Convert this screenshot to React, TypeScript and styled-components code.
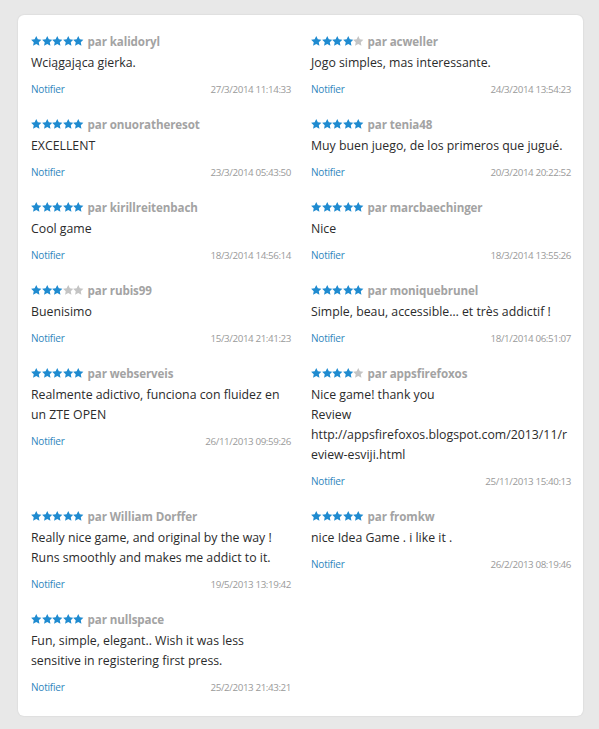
import React from "react";
import styled, { createGlobalStyle } from "styled-components";

const Global = createGlobalStyle`
  html, body { margin: 0; padding: 0; background: #e8e8e8; }
  body { font-family: "Open Sans", "Noto Sans", sans-serif; }
`;

const Page = styled.div`
  padding: 15px 16px 14px 18px;
  min-height: 729px;
  box-sizing: border-box;
`;

const Card = styled.section`
  width: 565px;
  background: #fff;
  border-radius: 6px;
  box-shadow: 0 0 2px rgba(0, 0, 0, 0.12);
  padding: 16px 12px 4px 13px;
  box-sizing: border-box;
`;

const List = styled.ul`
  list-style: none;
  margin: 0;
  padding: 0;
  display: grid;
  grid-template-columns: 260px 260px;
  column-gap: 20px;
  align-items: start;
`;

const Item = styled.li`
  margin: 0 0 16px;
`;

const Header = styled.div`
  display: flex;
  align-items: center;
  gap: 4px;
  height: 20px;
`;

const Stars = styled.span`
  display: inline-flex;
  gap: 0;
`;

const Author = styled.span`
  font-size: 11.6px;
  font-weight: 700;
  letter-spacing: -0.1px;
  color: #a3a3a3;
`;

const Body = styled.p`
  margin: 2px 0 0;
  font-size: 12.3px;
  line-height: 20px;
  color: #2b2b2b;
  white-space: pre-line;
  overflow-wrap: anywhere;
`;

const Footer = styled.div`
  display: flex;
  justify-content: space-between;
  align-items: center;
  margin-top: 7px;
  height: 18px;
`;

const Notify = styled.a`
  font-size: 10px;
  letter-spacing: -0.2px;
  color: #2f86bd;
  text-decoration: none;
`;

const DateText = styled.span`
  font-size: 9.8px;
  letter-spacing: -0.4px;
  color: #9a9a9a;
`;

const Star: React.FC<{ on: boolean }> = ({ on }) => (
  <svg width="10.5" height="10" viewBox="0 0 24 23">
    <path
      d="M12 0l3.6 7.5 8.2 1-6 5.7 1.5 8.1L12 18.4l-7.3 3.9 1.5-8.1-6-5.7 8.2-1z"
      fill={on ? "#1f8bd0" : "#c4c4c4"}
    />
  </svg>
);

type Review = { rating: number; author: string; text: string; date: string };

const reviews: Review[] = [
  { rating: 5, author: "kalidoryl", text: "Wciągająca gierka.", date: "27/3/2014 11:14:33" },
  { rating: 4, author: "acweller", text: "Jogo simples, mas interessante.", date: "24/3/2014 13:54:23" },
  { rating: 5, author: "onuoratheresot", text: "EXCELLENT", date: "23/3/2014 05:43:50" },
  { rating: 5, author: "tenia48", text: "Muy buen juego, de los primeros que jugué.", date: "20/3/2014 20:22:52" },
  { rating: 5, author: "kirillreitenbach", text: "Cool game", date: "18/3/2014 14:56:14" },
  { rating: 5, author: "marcbaechinger", text: "Nice", date: "18/3/2014 13:55:26" },
  { rating: 3, author: "rubis99", text: "Buenisimo", date: "15/3/2014 21:41:23" },
  { rating: 5, author: "moniquebrunel", text: "Simple, beau, accessible… et très addictif !", date: "18/1/2014 06:51:07" },
  { rating: 5, author: "webserveis", text: "Realmente adictivo, funciona con fluidez en un ZTE OPEN", date: "26/11/2013 09:59:26" },
  {
    rating: 4,
    author: "appsfirefoxos",
    text: "Nice game! thank you\nReview\nhttp://appsfirefoxos.blogspot.com/2013/11/review-esviji.html",
    date: "25/11/2013 15:40:13",
  },
  { rating: 5, author: "William Dorffer", text: "Really nice game, and original by the way ! Runs smoothly and makes me addict to it.", date: "19/5/2013 13:19:42" },
  { rating: 5, author: "fromkw", text: "nice Idea Game . i like it .", date: "26/2/2013 08:19:46" },
  { rating: 5, author: "nullspace", text: "Fun, simple, elegant.. Wish it was less sensitive in registering first press.", date: "25/2/2013 21:43:21" },
];

export default function App() {
  return (
    <>
      <Global />
      <Page>
        <Card>
          <List>
            {reviews.map((r) => (
              <Item key={r.author}>
                <Header>
                  <Stars>
                    {[1, 2, 3, 4, 5].map((i) => (
                      <Star key={i} on={i <= r.rating} />
                    ))}
                  </Stars>
                  <Author>par {r.author}</Author>
                </Header>
                <Body>{r.text}</Body>
                <Footer>
                  <Notify href="#">Notifier</Notify>
                  <DateText>{r.date}</DateText>
                </Footer>
              </Item>
            ))}
          </List>
        </Card>
      </Page>
    </>
  );
}
